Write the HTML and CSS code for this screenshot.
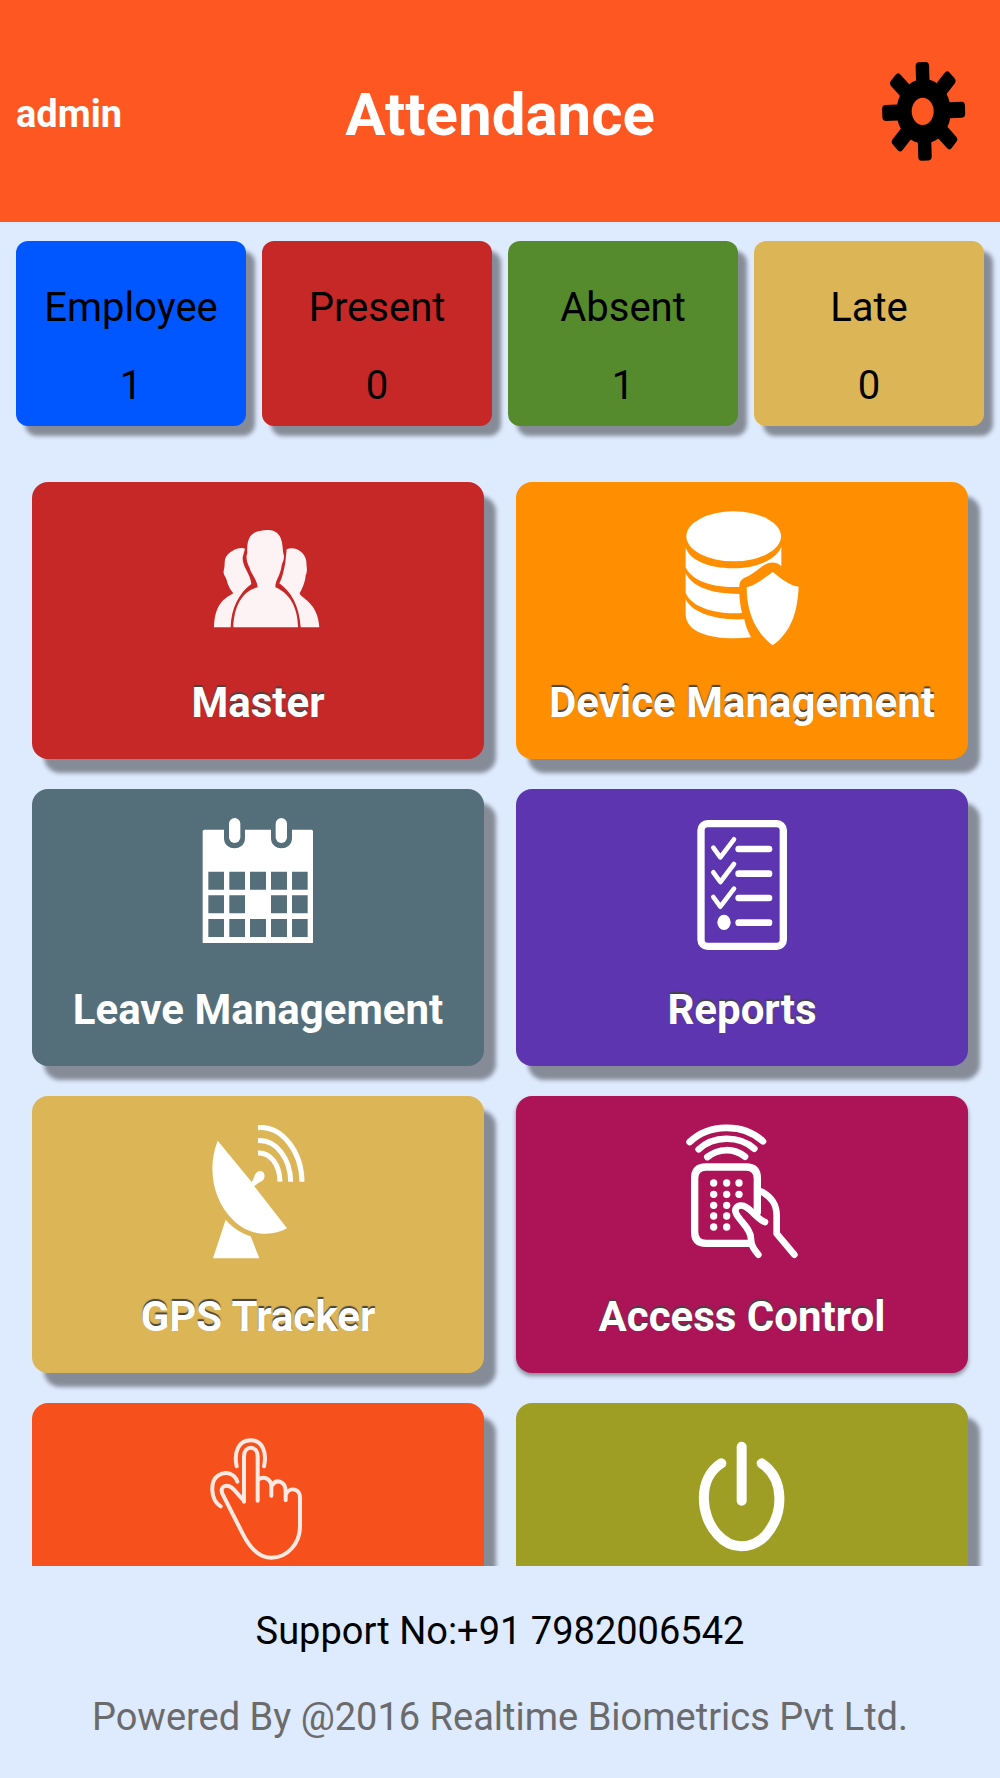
FILE: index.html
```html
<!DOCTYPE html>
<html lang="en">
<head>
  <meta charset="UTF-8">
  <meta name="viewport" content="width=device-width, initial-scale=1.0">
  <title>Attendance</title>
  <link rel="stylesheet" href="styles.css">
</head>
<body>
  <header class="header">
    <span class="user">admin</span>
    <h1 class="title">Attendance</h1>
    <button class="settings-btn" type="button" aria-label="Settings">
      <svg class="gear" viewBox="0 0 390 390">
        <g transform="translate(191 187) scale(.84 1) rotate(-2)">
          <circle r="97"/>
          <rect x="-24" y="-148" width="48" height="296" rx="12"/>
          <rect x="-24" y="-148" width="48" height="296" rx="12" transform="rotate(45)"/>
          <rect x="-24" y="-148" width="48" height="296" rx="12" transform="rotate(90)"/>
          <rect x="-24" y="-148" width="48" height="296" rx="12" transform="rotate(135)"/>
        </g>
        <ellipse class="gear-hole" cx="188" cy="187" rx="33" ry="41"/>
      </svg>
    </button>
  </header>

  <section class="stats">
    <div class="stat blue">
      <span>Employee</span>
      <span>1</span>
    </div>
    <div class="stat red">
      <span>Present</span>
      <span>0</span>
    </div>
    <div class="stat green">
      <span>Absent</span>
      <span>1</span>
    </div>
    <div class="stat gold">
      <span>Late</span>
      <span>0</span>
    </div>
  </section>

  <main class="menu">
    <a class="tile red" href="#master">
      <svg class="icon people" viewBox="-36 -30 480 480">
        <path d="M165 146C150 138 112 154 105 178C103 190 105 200 101 212C99 224 107 228 110 240C114 258 122 270 130 280C112 292 74 304 72 382H122C123 326 146 280 184 252C182 222 156 200 158 172Z"/>
        <path d="M290 148C312 138 344 152 349 184C349 200 354 214 347 226C346 246 336 268 329 280C330 294 384 306 388 382H332C328 318 304 276 268 250C280 226 282 206 286 188Z"/>
        <path d="M210 93C230 88 254 88 266 104C278 118 277 140 280 160C286 178 276 184 274 202C270 228 256 240 256 262C296 278 324 320 324 382H130C132 318 158 272 203 262C202 240 184 224 178 202C172 190 166 172 172 160C170 126 176 98 210 93Z"/>
      </svg>
      <span class="label raised">Master</span>
    </a>

    <a class="tile orange" href="#device">
      <svg class="icon" viewBox="6 0 480 480">
        <ellipse cx="221" cy="139" rx="142" ry="75"/>
        <path d="M77 172C88 210 145 235 219 235C290 235 350 208 364 170V228C345 212 325 216 305 230C280 250 265 258 252 264C240 272 238 280 238 291C155 294 95 272 77 232Z"/>
        <path d="M77 250C95 288 150 312 238 312C239 332 241 348 246 369C160 374 92 348 77 308Z"/>
        <path d="M77 328C96 366 160 392 253 388C256 408 264 424 273 442C190 452 77 440 77 372Z"/>
        <path d="M338 246C362 264 386 286 416 290C412 374 390 428 338 466C288 428 260 370 260 292C288 286 312 264 338 246Z"/>
      </svg>
      <span class="label raised">Device Management</span>
    </a>

    <a class="tile slate" href="#leave">
      <svg class="icon" viewBox="-6 -8 480 480">
        <path fill-rule="evenodd" d="M74 90H132V116C132 156 195 156 195 116V90H273V116C273 156 336 156 336 116V90H394Q399 90 399 95V430H68V95Q68 90 74 90ZM85 216V270H132V216ZM148 216V270H195V216ZM210 216V270H258V216ZM273 216V270H321V216ZM336 216V270H383V216ZM85 287V341H132V287ZM148 287V341H195V287ZM273 287V341H321V287ZM336 287V341H383V287ZM85 358V412H132V358ZM148 358V412H195V358ZM210 358V412H258V358ZM273 358V412H321V358ZM336 358V412H383V358Z"/>
        <rect x="147" y="55" width="34" height="75" rx="17"/>
        <rect x="287" y="55" width="34" height="75" rx="17"/>
      </svg>
      <span class="label">Leave Management</span>
    </a>

    <a class="tile purple" href="#reports">
      <svg class="icon line" viewBox="-24 -8 480 480">
        <rect class="w22" x="93" y="72" width="247" height="368" rx="20"/>
        <path class="w14" d="M130 144L151 173L192 119M130 218L151 247L192 193M130 292L151 321L192 267"/>
        <path class="w20" d="M206 148H297M206 222H297M206 295H297M206 369H297"/>
        <ellipse class="solid" cx="162" cy="368" rx="20" ry="23"/>
      </svg>
      <span class="label raised">Reports</span>
    </a>

    <a class="tile gold" href="#gps">
      <svg class="icon" viewBox="-36 -15 480 480">
        <path d="M83 95L185 219C194 206 192 200 198 193C208 178 228 188 223 206C218 220 205 218 193 232L291 358C250 382 180 384 130 334C70 276 50 180 83 95Z"/>
        <path d="M107 332C128 356 152 372 182 382L208 448H69Z"/>
        <path class="arc" d="M204 132C242 130 269 168 270 218M204 95C258 92 301 148 302 218M204 56C276 50 335 128 336 218"/>
      </svg>
      <span class="label raised">GPS Tracker</span>
    </a>

    <a class="tile pink flat" href="#access">
      <svg class="icon line" viewBox="-24 -15 480 480">
        <path class="w20" d="M59 99C116 45 218 41 279 97M86 121C130 80 206 78 253 119M112 144C146 118 190 116 225 143"/>
        <path class="w22" d="M238 403H108Q74 403 74 369V208Q74 174 108 174H228Q262 174 262 208V310"/>
        <path class="w20" d="M275 248C304 264 320 284 320 320V374L373 437M285 339C266 334 244 300 222 291C202 285 190 300 200 317C214 340 243 362 243 390C243 416 256 424 265 437"/>
        <g class="solid">
          <circle cx="131" cy="222" r="11"/><circle cx="170" cy="222" r="11"/><circle cx="207" cy="222" r="11"/>
          <circle cx="131" cy="256" r="11"/><circle cx="170" cy="256" r="11"/><circle cx="207" cy="256" r="11"/>
          <circle cx="131" cy="289" r="11"/><circle cx="170" cy="289" r="11"/>
          <circle cx="131" cy="321" r="11"/><circle cx="170" cy="321" r="11"/>
          <circle cx="131" cy="354" r="11"/><circle cx="170" cy="354" r="11"/>
        </g>
      </svg>
      <span class="label raised">Access Control</span>
    </a>

    <a class="tile tomato" href="#punch" aria-label="Punch">
      <svg class="icon line soft" viewBox="-36 36 480 480">
        <path class="w12" d="M162 308V172C162 138 203 138 203 172V305M203 242C222 230 244 238 244 264V290M246 260C258 238 286 246 287 276V304M289 284C300 262 330 270 330 296V382C330 434 292 476 244 476C204 476 176 440 158 404L97 284C88 260 112 252 132 272L162 306"/>
        <path class="w12" d="M140 202C130 156 148 124 182 124C216 124 232 158 222 202M92 322C60 302 60 246 84 230C108 214 134 224 142 248"/>
      </svg>
    </a>

    <a class="tile olive" href="#logout" aria-label="Logout">
      <svg class="icon line" viewBox="-24 36 480 480">
        <path class="w30" d="M215 143V305M154 193C82 238 90 350 142 406C184 454 244 452 286 410C344 344 344 240 275 193"/>
      </svg>
    </a>
  </main>

  <footer class="footer">
    <p>Support No:+91 7982006542</p>
    <p class="powered">Powered By @2016 Realtime Biometrics Pvt Ltd.</p>
  </footer>
</body>
</html>
```
FILE: styles.css
```css
* {
  margin: 0;
  padding: 0;
  box-sizing: border-box;
}

body {
  height: 100vh;
  display: flex;
  flex-direction: column;
  background: #deeafe;
  color: #000;
  font-family: Roboto, "Liberation Sans", sans-serif;
  font-size: 38px;
}

.header {
  display: grid;
  grid-template-columns: 1fr auto 1fr;
  align-items: center;
  padding: 49px 10px 43px;
  background: #ff5722;
  color: #fff;
}

.user {
  padding-left: 6px;
  font-weight: 700;
}

.title {
  font-size: 60px;
  font-weight: 700;
}

.settings-btn {
  justify-self: end;
  border: none;
  background: none;
  cursor: pointer;
}

.gear {
  display: block;
  width: 130px;
  height: 130px;
}

.gear-hole {
  fill: #ff5722;
}

.stats {
  display: grid;
  grid-template-columns: repeat(4, 1fr);
  gap: 16px;
  padding: 19px 16px 0;
}

.stat {
  display: flex;
  flex-direction: column;
  align-items: center;
  gap: 28px;
  padding: 42px 0 15px;
  border-radius: 12px;
  box-shadow: 9px 10px 4px rgba(0, 0, 0, 0.4);
  font-size: 40px;
  line-height: 50px;
}

.menu {
  flex: 1;
  min-height: 0;
  display: grid;
  grid-template-columns: 1fr 1fr;
  align-content: start;
  gap: 30px 32px;
  margin-top: 24px;
  padding: 32px 32px 0;
  overflow-y: auto;
  scrollbar-width: none;
}

.tile {
  display: flex;
  flex-direction: column;
  align-items: center;
  gap: 28px;
  min-height: 277px;
  padding-top: 8px;
  border-radius: 16px;
  box-shadow: 12px 14px 4px rgba(0, 0, 0, 0.4);
  color: #fff;
  text-decoration: none;
}

.flat {
  box-shadow: 0 3px 4px rgba(0, 0, 0, 0.4);
}

.label {
  font-size: 42px;
  font-weight: 700;
  line-height: 50px;
}

.raised {
  text-shadow: 0 -2px 1px #444;
}

.blue { background: #0057ff; }
.red { background: #c62828; }
.green { background: #558b2d; }
.gold { background: #dcb557; }
.orange { background: #ff8f00; }
.slate { background: #546e7a; }
.purple { background: #5e35b1; }
.pink { background: #ad1457; }
.tomato { background: #f6511d; }
.olive { background: #9e9d24; }

.icon {
  width: 160px;
  height: 160px;
  fill: #fff;
}

.people {
  fill: #fdf3f4;
}

.line {
  fill: none;
  stroke: #fff;
  stroke-linecap: round;
  stroke-linejoin: round;
}

.soft {
  stroke: #ffe9e2;
}

.solid {
  fill: #fff;
  stroke: none;
}

.arc {
  fill: none;
  stroke: #fff;
  stroke-width: 15;
}

.w12 { stroke-width: 12; }
.w14 { stroke-width: 14; }
.w20 { stroke-width: 20; }
.w22 { stroke-width: 22; }
.w30 { stroke-width: 30; }

.footer {
  display: flex;
  flex-direction: column;
  gap: 36px;
  padding: 40px 16px 36px;
  line-height: 50px;
  text-align: center;
}

.powered {
  color: #6b6b6b;
}
```
